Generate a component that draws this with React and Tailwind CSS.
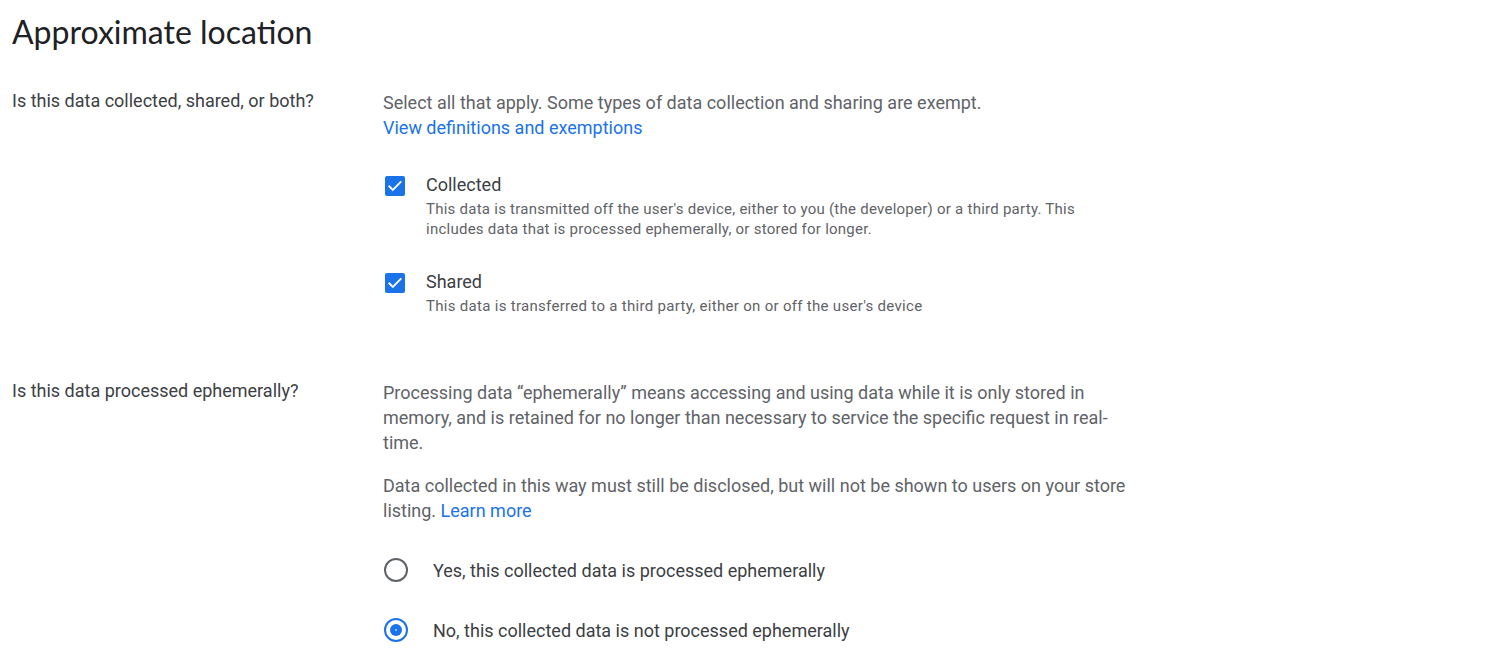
import React from "react";

const Checkbox = () => (
  <div className="mt-[5px] flex h-[20px] w-[20px] shrink-0 items-center justify-center rounded-[2px] bg-[#1a73e8]">
    <svg width="18" height="18" viewBox="0 0 24 24" fill="none">
      <path d="M4.5 12.5l4.6 4.6L19.5 6.8" stroke="#fff" strokeWidth="2.5" strokeLinecap="square" />
    </svg>
  </div>
);

const Radio = ({ checked }) => (
  <div
    className={
      checked
        ? "flex h-[24px] w-[24px] shrink-0 items-center justify-center rounded-full border-2 border-[#1a73e8]"
        : "flex h-[24px] w-[24px] shrink-0 items-center justify-center rounded-full border-2 border-[#5f6368]"
    }
  >
    {checked && (
      <div className="flex h-[12px] w-[12px] items-center justify-center rounded-full bg-[#1a73e8]">
        <div className="h-[2px] w-[2px] rounded-full bg-[#b8d2f8]" />
      </div>
    )}
  </div>
);

export default function App() {
  return (
    <div className="min-h-screen bg-white pl-[12px] font-['Roboto',sans-serif] text-[#3c4043]">
      <h1 className="pt-[14px] font-['Lato',sans-serif] text-[32px] leading-[36px] text-[#202124]">
        Approximate location
      </h1>

      <div className="mt-[39px] flex">
        <div className="w-[371px] shrink-0 text-[18px] leading-[24px] text-[#3c4043]">
          Is this data collected, shared, or both?
        </div>
        <div className="w-[750px]">
          <div className="mt-[1px] text-[18px] leading-[25px] text-[#5f6368]">
            Select all that apply. Some types of data collection and sharing are exempt.
          </div>
          <a className="block text-[18px] leading-[25px] text-[#1a73e8]">View definitions and exemptions</a>

          <div className="mt-[31px] flex gap-[21px] pl-[2px]">
            <Checkbox />
            <div>
              <div className="text-[18px] leading-[28px] text-[#3c4043]">Collected</div>
              <div className="w-[680px] text-[15px] leading-[20px] tracking-[0.25px] text-[#5f6368]">
                This data is transmitted off the user's device, either to you (the developer) or a third party. This
                includes data that is processed ephemerally, or stored for longer.
              </div>
            </div>
          </div>

          <div className="mt-[29px] flex gap-[21px] pl-[2px]">
            <Checkbox />
            <div>
              <div className="text-[18px] leading-[28px] text-[#3c4043]">Shared</div>
              <div className="text-[15px] leading-[20px] tracking-[0.3px] text-[#5f6368]">
                This data is transferred to a third party, either on or off the user's device
              </div>
            </div>
          </div>
        </div>
      </div>

      <div className="mt-[63px] flex">
        <div className="w-[371px] shrink-0 text-[18px] leading-[24px] text-[#3c4043]">
          Is this data processed ephemerally?
        </div>
        <div className="w-[750px]">
          <p className="mt-[1px] text-[18px] leading-[25px] text-[#5f6368]">
            Processing data “ephemerally” means accessing and using data while it is only stored in memory, and is
            retained for no longer than necessary to service the specific request in real-time.
          </p>
          <p className="mt-[18px] text-[18px] leading-[25px] text-[#5f6368]">
            Data collected in this way must still be disclosed, but will not be shown to users on your store
            listing. <a className="text-[#1a73e8]">Learn more</a>
          </p>

          <div className="mt-[17px] flex h-[60px] items-center gap-[25px] pl-[1px]">
            <Radio />
            <span className="text-[18px] text-[#3c4043]">Yes, this collected data is processed ephemerally</span>
          </div>
          <div className="flex h-[60px] items-center gap-[25px] pl-[1px]">
            <Radio checked />
            <span className="text-[18px] text-[#3c4043]">No, this collected data is not processed ephemerally</span>
          </div>
        </div>
      </div>
    </div>
  );
}
